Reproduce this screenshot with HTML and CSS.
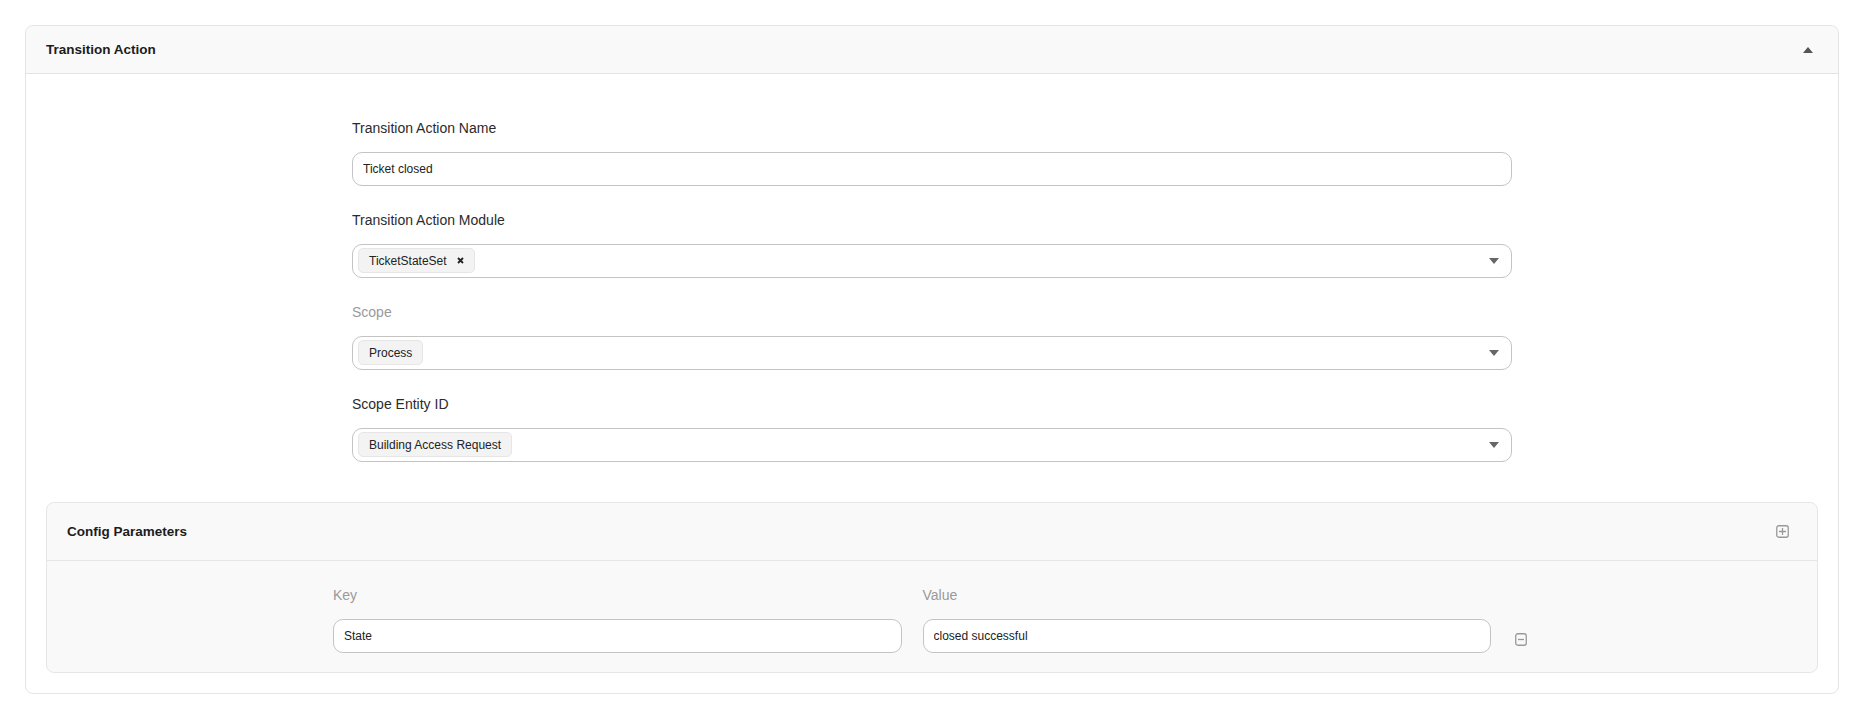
FILE: index.html
```html
<!DOCTYPE html>
<html lang="en">
<head>
    <meta charset="UTF-8">
    <meta name="viewport" content="width=device-width, initial-scale=1.0">
    <title>Transition Action</title>
    <link rel="stylesheet" href="styles.css">
</head>
<body>
    <div class="card">
        <!-- Header -->
        <div class="card-header">
            <h2 class="card-title">Transition Action</h2>
            <svg class="toggle" width="10" height="6" viewBox="0 0 10 6"><path d="M0 6 L5 0 L10 6 Z" fill="#555"/></svg>
        </div>

        <div class="card-body">
            <div class="form">
                <div class="field">
                    <label class="label">Transition Action Name</label>
                    <input class="input" type="text" value="Ticket closed">
                </div>

                <div class="field">
                    <label class="label">Transition Action Module</label>
                    <div class="select">
                        <span class="tag">TicketStateSet
                            <svg class="tag-remove" width="7" height="7" viewBox="0 0 7 7"><path d="M1 1 L6 6 M6 1 L1 6" stroke="#222" stroke-width="1.8"/></svg>
                        </span>
                        <svg class="caret" width="10" height="6" viewBox="0 0 10 6"><path d="M0 0 L10 0 L5 6 Z" fill="#666"/></svg>
                    </div>
                </div>

                <div class="field">
                    <label class="label disabled">Scope</label>
                    <div class="select">
                        <span class="tag">Process</span>
                        <svg class="caret" width="10" height="6" viewBox="0 0 10 6"><path d="M0 0 L10 0 L5 6 Z" fill="#666"/></svg>
                    </div>
                </div>

                <div class="field">
                    <label class="label">Scope Entity ID</label>
                    <div class="select">
                        <span class="tag">Building Access Request</span>
                        <svg class="caret" width="10" height="6" viewBox="0 0 10 6"><path d="M0 0 L10 0 L5 6 Z" fill="#666"/></svg>
                    </div>
                </div>
            </div>

            <!-- Config Parameters -->
            <div class="subcard">
                <div class="subcard-header">
                    <h3 class="subcard-title">Config Parameters</h3>
                    <svg class="icon-btn" width="13" height="13" viewBox="0 0 13 13"><rect x="0.75" y="0.75" width="11.5" height="11.5" rx="2" fill="none" stroke="#999" stroke-width="1.3"/><path d="M6.5 3 V10 M3 6.5 H10" stroke="#999" stroke-width="1.3"/></svg>
                </div>
                <div class="subcard-body">
                    <div class="kv-row">
                        <div class="kv-field">
                            <label class="label disabled">Key</label>
                            <input class="input" type="text" value="State">
                        </div>
                        <div class="kv-field">
                            <label class="label disabled">Value</label>
                            <input class="input" type="text" value="closed successful">
                        </div>
                        <svg class="icon-btn remove" width="12" height="13" viewBox="0 0 12 13"><rect x="0.75" y="0.75" width="10.5" height="11.5" rx="2" fill="none" stroke="#999" stroke-width="1.3"/><path d="M3 6.5 H9" stroke="#999" stroke-width="1.3"/></svg>
                    </div>
                </div>
            </div>
        </div>
    </div>
</body>
</html>
```

FILE: styles.css
```css
body { font-family: "Liberation Sans", Arial, sans-serif; background-color: #fff; color: #333; margin: 25px 14px 25px 25px; }

.card {
    border: 1px solid #e4e4e4;
    border-radius: 8px;
    background-color: #fff;
}

.card-header {
    display: flex;
    align-items: center;
    justify-content: space-between;
    padding: 15px 25px 14px 20px;
    background-color: #f9f9f9;
    border-bottom: 1px solid #e4e4e4;
    border-radius: 8px 8px 0 0;
}

.card-title {
    margin: 0;
    font-size: 13.5px;
    line-height: 18px;
    font-weight: bold;
    color: #1c1c1c;
}

.card-body { padding: 20px; }

.form {
    max-width: 1160px;
    margin: 0 auto;
    padding: 24px 0 40px;
}

.field { margin-bottom: 24px; }
.field:last-child { margin-bottom: 0; }

.label {
    display: block;
    font-size: 14px;
    line-height: 20px;
    margin-bottom: 14px;
    color: #2b2b2b;
}

.label.disabled { color: #9a9a9a; }

.input {
    display: block;
    box-sizing: border-box;
    width: 100%;
    height: 34px;
    padding: 0 10px;
    border: 1px solid #c4c4c4;
    border-radius: 10px;
    background-color: #fff;
    font-family: inherit;
    font-size: 12px;
    color: #222;
    outline: none;
}

.select {
    display: flex;
    align-items: center;
    box-sizing: border-box;
    height: 34px;
    padding: 0 12px 1px 5px;
    border: 1px solid #c4c4c4;
    border-radius: 10px;
    background-color: #fff;
}

.tag {
    display: inline-flex;
    align-items: center;
    gap: 10px;
    height: 23px;
    padding: 0 10px;
    border: 1px solid #e6e6e6;
    border-radius: 5px;
    background-color: #f3f3f3;
    font-size: 12px;
    color: #222;
}

.caret { margin-left: auto; }

.subcard {
    border: 1px solid #e6e6e4;
    border-radius: 8px;
    background-color: #f9f9f9;
}

.subcard-header {
    display: flex;
    align-items: center;
    justify-content: space-between;
    padding: 19px 28px 19px 20px;
    border-bottom: 1px solid #e6e6e4;
}

.subcard-title {
    margin: 0;
    font-size: 13.5px;
    line-height: 19px;
    font-weight: bold;
    color: #1c1c1c;
}

.subcard-body { padding: 24px 0 19px; }

.kv-row {
    display: flex;
    align-items: flex-end;
    gap: 21px;
    padding: 0 290px 0 286px;
}

.kv-field { flex: 1; }

.icon-btn.remove { margin-left: 3px; margin-bottom: 7px; }
```
